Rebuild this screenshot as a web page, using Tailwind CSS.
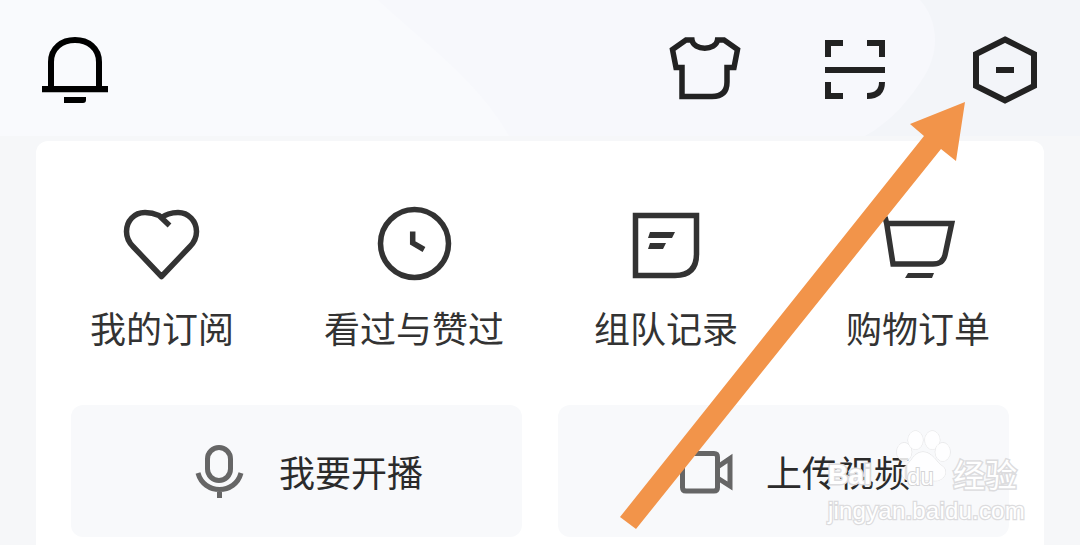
<!DOCTYPE html>
<html lang="zh">
<head>
  <meta charset="UTF-8">
  <title>我的</title>
  <script src="https://cdn.jsdelivr.net/npm/@tailwindcss/browser@4"></script>
</head>
<body class="bg-[#f6f7f9] font-['Noto_Sans_CJK_SC','Noto_Sans',sans-serif] text-[#333]">
  <div class="relative w-[1080px] h-[545px] overflow-hidden">

    <!-- 顶部背景 -->
    <svg class="absolute left-0 top-0" width="1080" height="136" viewBox="0 0 1080 136">
      <rect width="1080" height="136" fill="#f3f5f9"/>
      <path d="M0 0 H920 C938 20 940 50 925 75 C910 100 890 122 865 136 H0 Z" fill="#f7f8fc"/>
      <path d="M0 0 H378 C420 40 478 80 509 136 H0 Z" fill="#f9fafd"/>
    </svg>

    <!-- 顶部图标 -->
    <header class="relative h-[136px] pl-[36px] pr-[39px] pt-[32px] flex justify-between items-start">
      <svg width="72" height="72" viewBox="36 32 72 72">
        <path d="M51 88 V62 C51 48 62 40 75 40 C88 40 99 48 99 62 V88" fill="none" stroke="#000" stroke-width="6"/>
        <path d="M42 86 H108 V92.300 H42 Z M64 97 H86 V100 Q86 103 83 103 H64 Z" fill="#000"/>
      </svg>
      <div class="flex gap-[78px]">
        <svg width="72" height="72" viewBox="669 32 72 72">
          <path d="M692 40 H686 L672.500 49.500 L676 67.500 H682 V96.500 H712 Q727 96.500 727 82 V67.500 H734 L737.500 49.500 L724 40 H717.500 C716 51 693.500 51 692 40 Z" fill="none" stroke="#222" stroke-width="5.500"/>
        </svg>
        <svg width="72" height="72" viewBox="819 32 72 72">
          <path d="M843 43 H828 V57 M867 43 H882 V57 M825 70 H885 M828 82 V96 H843 M882 82 Q882 96 867 96" fill="none" stroke="#222" stroke-width="6"/>
        </svg>
        <svg width="72" height="72" viewBox="969 32 72 72">
          <path d="M1005 39.500 L1034 54 V86 L1005 100.500 L976 86 V54 Z" fill="none" stroke="#222" stroke-width="6"/>
          <path d="M996 70 H1014" fill="none" stroke="#222" stroke-width="6"/>
        </svg>
      </div>
    </header>

    <!-- 卡片 -->
    <main class="absolute left-[36px] top-[141px] w-[1008px] h-[500px] bg-white rounded-[12px]">
      <div class="grid grid-cols-4 pt-[64px]">
        <div class="flex flex-col items-center">
          <svg width="80" height="80" viewBox="121 205 80 80">
            <path d="M168.500 225.500 L158 215.500 C153.500 213.500 149 212.500 144 212.500 C133 212.500 125.500 221 125.500 231.500 C125.500 237.500 128 242.500 132 246.500 L160.500 276.500 L189 246.500 C193 242.500 195.500 237.500 195.500 231.500 C195.500 221 187.500 212.500 177 212.500 C171 212.500 165 214 159 218.500" fill="none" stroke="#333" stroke-width="5.500" stroke-linejoin="round"/>
          </svg>
          <span class="mt-[20px] text-[36px] leading-[44px]">我的订阅</span>
        </div>
        <div class="flex flex-col items-center">
          <svg width="80" height="80" viewBox="374 205 80 80">
            <circle cx="414.500" cy="243.500" r="34" fill="none" stroke="#333" stroke-width="5.500"/>
            <path d="M412.700 231.500 V243 L424 249.500" fill="none" stroke="#333" stroke-width="5.500"/>
          </svg>
          <span class="mt-[20px] text-[36px] leading-[44px]">看过与赞过</span>
        </div>
        <div class="flex flex-col items-center">
          <svg width="80" height="80" viewBox="626 205 80 80">
            <path d="M635.500 215.500 H696.500 V254 Q696.500 275.500 675 275.500 H635.500 Z" fill="none" stroke="#333" stroke-width="5.500"/>
            <path d="M650 232 H675 L672 238 H648 Z M650 243 H666 L663 249 H648 Z" fill="#333"/>
          </svg>
          <span class="mt-[20px] text-[36px] leading-[44px]">组队记录</span>
        </div>
        <div class="flex flex-col items-center">
          <svg width="80" height="80" viewBox="878 205 80 80">
            <path d="M885 217 L886.700 223.500 H951.700 L945 255 Q943 264 933 264 H893 L886.700 223.500" fill="none" stroke="#333" stroke-width="5.500"/>
            <path d="M908 273 H934 L932 278 H905 Z" fill="#333"/>
          </svg>
          <span class="mt-[20px] text-[36px] leading-[44px]">购物订单</span>
        </div>
      </div>

      <div class="grid grid-cols-2 gap-[36px] px-[35px] mt-[56px]">
        <div class="h-[132px] bg-[#f8f9fb] rounded-[12px] flex items-center pl-[120px] gap-[30px]">
          <svg width="58" height="58" viewBox="191 442 58 58">
            <rect x="207.500" y="447.500" width="23" height="33" rx="11.500" fill="none" stroke="#666" stroke-width="5"/>
            <path d="M198 473 C201 484 210 489.500 219.500 489.500 C229 489.500 238 484 241 473 M219.500 489 V498" fill="none" stroke="#666" stroke-width="5"/>
          </svg>
          <span class="text-[36px] leading-[44px] text-[#2b2b2b]">我要开播</span>
        </div>
        <div class="h-[132px] bg-[#f8f9fb] rounded-[12px] flex items-center pl-[120px] gap-[30px]">
          <svg width="58" height="58" viewBox="678 442 58 58">
            <path d="M686 453.500 H714 Q717.500 453.500 717.500 457 V487.500 Q717.500 491 714 491 H686 Q682.500 491 682.500 487.500 V457 Q682.500 453.500 686 453.500 Z M717.500 467 L730 458.500 V486 L717.500 478" fill="none" stroke="#666" stroke-width="5"/>
          </svg>
          <span class="text-[36px] leading-[44px] text-[#2b2b2b]">上传视频</span>
        </div>
      </div>
    </main>

    <!-- 标注箭头 -->
    <svg class="absolute left-0 top-0" width="1080" height="545" viewBox="0 0 1080 545">
      <polygon points="965,102 910,124 924,136 620,517 636,529 941,149 956,161" fill="#f2944a"/>
    </svg>

    <!-- 水印 -->
    <div class="absolute left-[826px] top-[424px] w-[200px] h-[104px] text-white font-['Liberation_Sans',sans-serif] [paint-order:stroke_fill]">
      <svg class="absolute left-[67px] top-[6px]" width="60" height="54" viewBox="0 0 64 64" preserveAspectRatio="none">
        <g fill="#ffffff" fill-opacity="0.85" stroke="#e0e0e2" stroke-width="1">
          <ellipse cx="12" cy="26" rx="8" ry="11"/>
          <ellipse cx="24" cy="12" rx="8" ry="11"/>
          <ellipse cx="42" cy="12" rx="8" ry="11"/>
          <ellipse cx="53" cy="26" rx="8" ry="11"/>
          <path d="M32 26 C42 26 46 38 54 44 C60 52 52 62 42 60 C36 59 28 59 22 60 C12 62 6 52 12 44 C20 38 22 26 32 26 Z"/>
        </g>
      </svg>
      <span class="absolute left-[2px] top-[34px] text-[28px] leading-[34px] font-bold [-webkit-text-stroke:3px_#dcdcde]">Bai</span>
      <span class="absolute left-[81px] top-[39px] text-[24px] leading-[28px] [-webkit-text-stroke:2px_#d4d4d6]">du</span>
      <span class="absolute left-[127px] top-[30px] text-[32px] leading-[38px] font-['Noto_Sans_CJK_SC',sans-serif] [-webkit-text-stroke:3px_#dcdcde]">经验</span>
      <span class="absolute left-[2px] top-[72px] text-[24px] leading-[30px] tracking-[0.2px] whitespace-nowrap [-webkit-text-stroke:2.500px_#dcdcde]">jingyan.baidu.com</span>
    </div>
  </div>
</body>
</html>
